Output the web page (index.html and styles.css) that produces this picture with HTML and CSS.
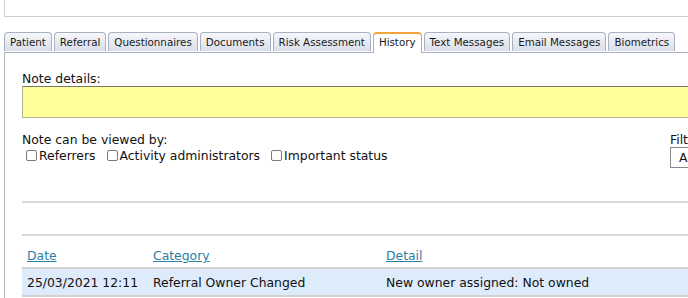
FILE: index.html
```html
<!DOCTYPE HTML>
<html>

<head>
    <link rel="stylesheet" href="styles.css">
    <title>Referral history</title>
</head>

<body>
    <div class="topbox"></div>
    <div class="tabs">
        <div class="tab">Patient</div>
        <div class="tab">Referral</div>
        <div class="tab">Questionnaires</div>
        <div class="tab">Documents</div>
        <div class="tab">Risk Assessment</div>
        <div class="tab active">History</div>
        <div class="tab">Text Messages</div>
        <div class="tab">Email Messages</div>
        <div class="tab">Biometrics</div>
    </div>
    <div class="panel">
        <div class="inner">
            <p class="label">Note details:</p>
            <input class="note" type="text">
            <div class="options">
                <div>
                    <p class="label">Note can be viewed by:</p>
                    <div class="checks">
                        <label><input type="checkbox">Referrers</label>
                        <label><input type="checkbox">Activity administrators</label>
                        <label><input type="checkbox">Important status</label>
                    </div>
                </div>
                <div class="filter">
                    <p class="label">Filter:</p>
                    <select>
                        <option>All</option>
                    </select>
                </div>
            </div>
            <div class="bar"></div>
            <table class="history">
                <tr>
                    <th class="c1"><a href="#">Date</a></th>
                    <th class="c2"><a href="#">Category</a></th>
                    <th><a href="#">Detail</a></th>
                </tr>
                <tr class="row">
                    <td>25/03/2021 12:11</td>
                    <td>Referral Owner Changed</td>
                    <td>New owner assigned: Not owned</td>
                </tr>
            </table>
        </div>
    </div>
</body>

</html>
```

FILE: styles.css
```css
html, body {
    overflow: hidden;
}
body {
    margin: 0;
    width: 900px;
    height: 298px;
    background-color: white;
    color: #111;
    font-family: "DejaVu Sans", Verdana, sans-serif;
    font-size: 12.4px;
}
.topbox {
    margin-left: 4px;
    height: 16px;
    border-left: 1px solid #cfcfcf;
    border-bottom: 1px solid #cfcfcf;
}
.tabs {
    display: flex;
    gap: 2px;
    margin: 15px 0 0 4px;
}
.tab {
    height: 18px;
    line-height: 18px;
    padding: 0 5px;
    font-size: 10.3px;
    color: #1a1a1a;
    border: 1px solid #a9b0bf;
    border-bottom: none;
    border-radius: 4px 4px 0 0;
    background: linear-gradient(#f6f7fb, #d9deea);
}
.tab.active {
    position: relative;
    margin-bottom: -1px;
    height: 18px;
    border-top: 2px solid #f2a33a;
    line-height: 17px;
    background: white;
    padding-bottom: 1px;
}
.panel {
    margin-left: 4px;
    height: 300px;
    border-left: 1px solid #b8b8b8;
    border-top: 1px solid #a9b0bf;
}
.inner {
    width: 770px;
    padding: 18px 0 0 17px;
}
.label {
    margin: 0;
    line-height: 15px;
}
.note {
    display: block;
    box-sizing: border-box;
    width: 770px;
    height: 32px;
    margin: 0;
    border: 1px solid #b5b58a;
    border-top-color: #77776a;
    background-color: #ffff99;
}
.options {
    display: flex;
    justify-content: space-between;
    margin-top: 14px;
}
.checks {
    display: flex;
    gap: 7px;
    line-height: 17px;
}
.checks input {
    appearance: none;
    width: 11px;
    height: 11px;
    margin: 0 2px 0 4px;
    border: 1px solid #7a7a7a;
    border-radius: 2px;
    background: white;
    vertical-align: -1px;
}
.filter {
    width: 122px;
}
.filter select {
    width: 100px;
    height: 21px;
    font: inherit;
    color: #111;
    border: 1px solid #8a8a8a;
    border-radius: 0;
    background: white;
    padding: 0 4px;
}
.bar {
    height: 31px;
    margin-top: 33px;
    border-top: 2px solid #d8d8d8;
    border-bottom: 2px solid #d8d8d8;
}
.history {
    width: 100%;
    border-collapse: collapse;
}
.history th {
    height: 27px;
    padding: 0 5px 4px;
    text-align: left;
    font-weight: normal;
    vertical-align: bottom;
}
.history a {
    color: #2c7ea6;
}
.c1 {
    width: 116px;
}
.c2 {
    width: 223px;
}
.row td {
    height: 26px;
    padding: 0 5px;
    background-color: #deebfa;
    border-top: 2px solid #d2d2d2;
    border-bottom: 2px solid #d2d2d2;
}
```
